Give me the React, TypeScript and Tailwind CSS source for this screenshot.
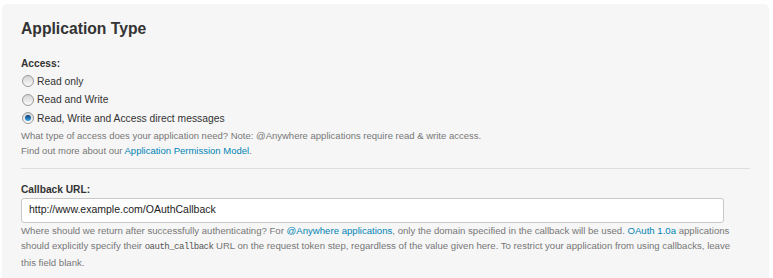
export default function App() {
  const options = [
    { label: 'Read only', checked: false },
    { label: 'Read and Write', checked: false },
    { label: 'Read, Write and Access direct messages', checked: true },
  ];

  return (
    <div className="min-h-screen bg-white pt-[4px] pl-[2px] pr-[4px] font-['Liberation_Sans',Arial,sans-serif]">
      <div className="bg-[#f6f6f6] rounded-[5px] px-[19px] pt-[15px] pb-[12px] w-[767px]">
        <h2 className="text-[#333] text-[15.7px] font-bold leading-[20px]">Application Type</h2>

        {/* Access */}
        <div className="mt-[18px]">
          <p className="text-[#333] text-[10.2px] font-bold leading-[14px]">Access:</p>
          <div className="mt-[1px] flex flex-col">
            {options.map((o) => (
              <label key={o.label} className="flex items-center gap-[3px] h-[18.5px] text-[10.3px] text-[#333]">
                <span className="ml-[1px] w-[12px] h-[12px] rounded-full border border-[#9a9a9a] bg-gradient-to-b from-[#d4d4d4] to-[#fbfbfb] flex items-center justify-center shrink-0">
                  {o.checked && (
                    <span className="w-[6px] h-[6px] rounded-full bg-gradient-to-b from-[#0a3f78] to-[#3ea6ee]" />
                  )}
                </span>
                {o.label}
              </label>
            ))}
          </div>
          <p className="text-[9.5px] leading-[15px] text-[#777]">
            What type of access does your application need? Note: @Anywhere applications require read &amp; write access.
            <br />
            Find out more about our <span className="text-[#0084b4]">Application Permission Model</span>.
          </p>
        </div>

        <div className="mt-[10px] h-px bg-[#dddddd] w-[729px]" />

        {/* Callback URL */}
        <div className="mt-[14px]">
          <p className="text-[#333] text-[10.2px] font-bold leading-[14px]">Callback URL:</p>
          <div className="mt-[1px] w-[703px] h-[25px] bg-white border border-[#c8c8c8] rounded-[3px] flex items-center px-[7px] text-[10.5px] text-[#222]">
            http://www.example.com/OAuthCallback
          </div>
          <p className="text-[9.6px] leading-[15px] text-[#777] w-[716px]">
            Where should we return after successfully authenticating? For <span className="text-[#0084b4]">@Anywhere applications</span>, only the domain specified in the callback will be used. <span className="text-[#0084b4]">OAuth 1.0a</span> applications should explicitly specify their <span className="font-['Liberation_Mono',monospace] text-[9px] tracking-[-0.5px] text-[#555]">oauth_callback</span> URL on the request token step, regardless of the value given here. To restrict your application from using callbacks, leave this field blank.
          </p>
        </div>
      </div>
    </div>
  );
}
